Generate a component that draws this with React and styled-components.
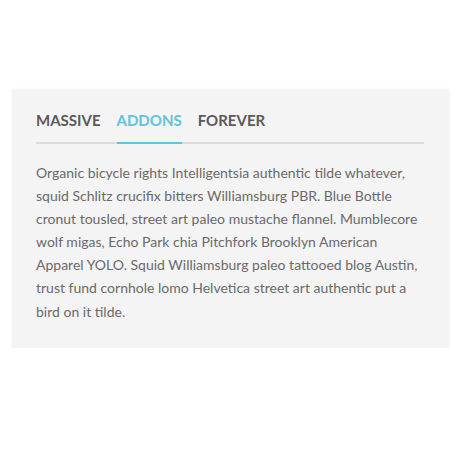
import React, { useState } from "react";
import styled, { createGlobalStyle } from "styled-components";

const Global = createGlobalStyle`
  body {
    margin: 0;
    background: #fff;
    font-family: Lato, "Open Sans", sans-serif;
  }
`;

const Page = styled.main`
  padding: 89px 11px 0 12px;
`;

const Panel = styled.section`
  background: #f4f4f4;
  box-shadow: 0 0 3px rgba(0, 0, 0, 0.06);
  padding: 20px 25px 28px 24px;
  height: 259px;
  box-sizing: border-box;
`;

const Tabs = styled.ul`
  display: flex;
  gap: 16px;
  list-style: none;
  margin: 0;
  padding: 0;
  border-bottom: 2px solid #dcdcdc;
`;

const Tab = styled.li`
  font-size: 15px;
  font-weight: 700;
  color: ${(p) => (p.$active ? "#62c3dc" : "#5a5a5a")};
  padding: 2px 0 13px;
  margin-bottom: -2px;
  border-bottom: 2px solid ${(p) => (p.$active ? "#62c3dc" : "transparent")};
  cursor: pointer;
`;

const Body = styled.p`
  margin: 17px 0 0;
  font-size: 14px;
  line-height: 23.1px;
  color: #6a6a6a;
`;

export default function App() {
  const [active, setActive] = useState("ADDONS");
  const tabs = ["MASSIVE", "ADDONS", "FOREVER"];

  return (
    <>
      <Global />
      <Page>
        <Panel>
          <Tabs>
            {tabs.map((t) => (
              <Tab key={t} $active={t === active} onClick={() => setActive(t)}>
                {t}
              </Tab>
            ))}
          </Tabs>
          <Body>
            Organic bicycle rights Intelligentsia authentic tilde whatever,
            squid Schlitz crucifix bitters Williamsburg PBR. Blue Bottle cronut
            tousled, street art paleo mustache flannel. Mumblecore wolf migas,
            Echo Park chia Pitchfork Brooklyn American Apparel YOLO. Squid
            Williamsburg paleo tattooed blog Austin, trust fund cornhole lomo
            Helvetica street art authentic put a bird on it tilde.
          </Body>
        </Panel>
      </Page>
    </>
  );
}
